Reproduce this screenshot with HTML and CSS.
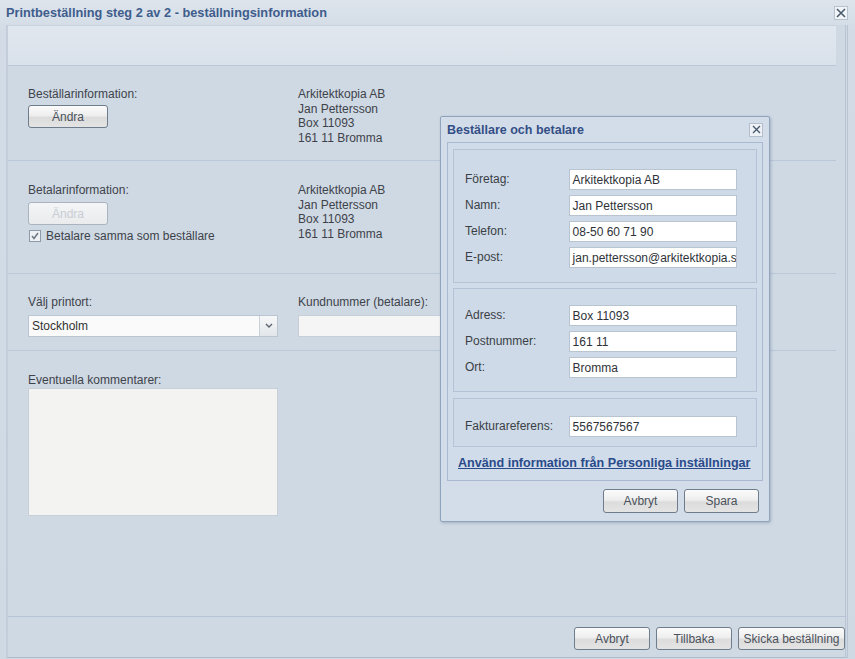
FILE: index.html
```html
<!DOCTYPE html>
<html lang="sv">
<head>
<meta charset="utf-8">
<title>Printbeställning</title>
<link rel="stylesheet" href="styles.css">
</head>
<body>
<div class="window">
  <div class="titlebar">
    <span class="title">Printbeställning steg 2 av 2 - beställningsinformation</span>
    <span class="close"><svg width="10" height="10" viewBox="0 0 10 10"><path d="M1 1L9 9M9 1L1 9" stroke="#4a5a6e" stroke-width="1.6"/></svg></span>
  </div>
  <div class="frame">
    <div class="toolbar"></div>
    <div class="section s1">
      <div class="col-left">
        <div class="label">Beställarinformation:</div>
        <button class="btn">Ändra</button>
      </div>
      <div class="col-right addr">
        <div>Arkitektkopia AB</div>
        <div>Jan Pettersson</div>
        <div>Box 11093</div>
        <div>161 11 Bromma</div>
      </div>
    </div>
    <div class="section s2">
      <div class="col-left">
        <div class="label">Betalarinformation:</div>
        <button class="btn disabled">Ändra</button>
        <label class="check"><span class="box"><svg width="10" height="10" viewBox="0 0 10 10"><path d="M2 5L4 7.5L8 2" fill="none" stroke="#6d7782" stroke-width="1.5"/></svg></span>Betalare samma som beställare</label>
      </div>
      <div class="col-right addr">
        <div>Arkitektkopia AB</div>
        <div>Jan Pettersson</div>
        <div>Box 11093</div>
        <div>161 11 Bromma</div>
      </div>
    </div>
    <div class="section s3">
      <div class="col-left">
        <div class="label">Välj printort:</div>
        <div class="select"><span class="sel-text">Stockholm</span><span class="sel-arrow"><svg width="8" height="6" viewBox="0 0 8 6"><path d="M1 1L4 4L7 1" fill="none" stroke="#5a6470" stroke-width="1.4"/></svg></span></div>
      </div>
      <div class="col-right">
        <div class="label">Kundnummer (betalare):</div>
        <div class="textinput wide"></div>
      </div>
    </div>
    <div class="section s4">
      <div class="col-left">
        <div class="label">Eventuella kommentarer:</div>
        <div class="textarea"></div>
      </div>
    </div>
    <div class="footer">
      <button class="btn fbtn">Avbryt</button>
      <button class="btn fbtn">Tillbaka</button>
      <button class="btn fbtn big">Skicka beställning</button>
    </div>
  </div>

  <div class="dialog">
    <div class="dlg-title">
      <span>Beställare och betalare</span>
      <span class="dlg-close"><svg width="9" height="9" viewBox="0 0 9 9"><path d="M1 1L8 8M8 1L1 8" stroke="#4a5a6e" stroke-width="1.4"/></svg></span>
    </div>
    <div class="dlg-panel">
      <div class="fs fs1">
        <div class="row"><span class="flabel">Företag:</span><span class="finput">Arkitektkopia AB</span></div>
        <div class="row"><span class="flabel">Namn:</span><span class="finput">Jan Pettersson</span></div>
        <div class="row"><span class="flabel">Telefon:</span><span class="finput">08-50 60 71 90</span></div>
        <div class="row"><span class="flabel">E-post:</span><span class="finput">jan.pettersson@arkitektkopia.se</span></div>
      </div>
      <div class="fs fs2">
        <div class="row"><span class="flabel">Adress:</span><span class="finput">Box 11093</span></div>
        <div class="row"><span class="flabel">Postnummer:</span><span class="finput">161 11</span></div>
        <div class="row"><span class="flabel">Ort:</span><span class="finput">Bromma</span></div>
      </div>
      <div class="fs fs3">
        <div class="row"><span class="flabel">Fakturareferens:</span><span class="finput">5567567567</span></div>
      </div>
      <a class="link" href="#">Använd information från Personliga inställningar</a>
    </div>
    <div class="dlg-buttons">
      <button class="btn dbtn">Avbryt</button>
      <button class="btn dbtn">Spara</button>
    </div>
  </div>
</div>
</body>
</html>
```

FILE: styles.css
```css
* { box-sizing: border-box; }
html, body { margin: 0; padding: 0; }
body {
  width: 855px;
  height: 659px;
  overflow: hidden;
  background: #cfd9e4;
  font-family: "Liberation Sans", Arial, sans-serif;
  font-size: 12px;
  color: #3e434a;
}
.window {
  position: relative;
  width: 855px;
  height: 659px;
  display: flex;
  flex-direction: column;
  background: linear-gradient(#dde4ec, #d3dce6 30px, #cfd9e4);
}
.titlebar {
  height: 25px;
  flex: none;
  display: flex;
  align-items: center;
  justify-content: space-between;
  padding: 0 6px 0 6px;
}
.title {
  font-weight: bold;
  font-size: 12.75px;
  color: #3f5d8c;
}
.close {
  width: 14px;
  height: 14px;
  border: 1px solid #b7c2cf;
  background: #f2f5f8;
  display: flex;
  align-items: center;
  justify-content: center;
  margin-right: 1px;
}
.frame {
  flex: 1;
  margin: 0 7px 1px 6px;
  border-left: 2px solid #c3ceda;
  border-right: 3px double #b8c4d4;
  border-bottom: 1px solid #aebccd;
  display: flex;
  flex-direction: column;
  background: #cfd9e4;
}
.toolbar {
  height: 41px;
  flex: none;
  background: linear-gradient(#e1e7ee, #d9e1ea);
  border-top: 1px solid #c9d3de;
  border-bottom: 1px solid #b9c7d9;
  margin-right: 9px;
}
.section {
  display: flex;
  padding-left: 20px;
  border-bottom: 1px solid #bac8da;
  margin-right: 9px;
}
.col-left { width: 270px; display: flex; flex-direction: column; align-items: flex-start; }
.col-right { flex: 1; }
.label { line-height: 14px; margin-bottom: 5px; }
.addr div { line-height: 14.5px; }
.s1 { height: 95px; padding-top: 21px; }
.s1 .label { margin-bottom: 4px; }
.s2 { height: 113px; padding-top: 22px; }
.s3 { height: 77px; padding-top: 21px; }
.s4 { flex: 1; padding-top: 22px; }
.s3 .col-left .label, .s3 .col-right .label { margin-bottom: 6px; }
.s4 .label { margin-bottom: 4px; }

.btn {
  font-family: "Liberation Sans", Arial, sans-serif;
  font-size: 12px;
  color: #4b525b;
  background: linear-gradient(#fbfbfb, #eeeeee 45%, #dcdcdc 55%, #e4e4e4);
  border: 1px solid #6f7c8b;
  border-radius: 3px;
  height: 23px;
  padding: 0;
  cursor: default;
}
.col-left .btn { width: 80px; }
.btn.disabled {
  color: #c8cdd3;
  border-color: #aab3be;
  background: linear-gradient(#f4f5f6, #e9ebed);
}
.check {
  display: flex;
  align-items: center;
  margin-top: 4px;
  margin-left: 1px;
  line-height: 14px;
}
.box {
  width: 12px;
  height: 12px;
  border: 1px solid #8e9aa8;
  background: #eef1f4;
  margin-right: 5px;
  display: flex;
  align-items: center;
  justify-content: center;
}
.select {
  width: 250px;
  height: 22px;
  display: flex;
  background: #fafafa;
  border: 1px solid #bcc6d2;
}
.sel-text { flex: 1; padding: 3px 0 0 3px; color: #333; }
.sel-arrow {
  width: 18px;
  border-left: 1px solid #c8d0da;
  background: linear-gradient(#f6f7f8, #e2e6ea);
  display: flex;
  align-items: center;
  justify-content: center;
}
.textinput.wide {
  height: 22px;
  width: 200px;
  background: #f4f5f4;
  border: 1px solid #c6ced8;
}
.textarea {
  width: 250px;
  height: 128px;
  background: #f3f3f1;
  border: 1px solid #c7cfd9;
  margin-top: -3px;
}
.footer {
  height: 41px;
  flex: none;
  display: flex;
  justify-content: flex-end;
  align-items: flex-start;
  gap: 6px;
  padding: 10px 0 0 0;
  border-top: 1px solid #b6c3d6;
  margin-top: -1px;
}
.fbtn { width: 76px; }
.fbtn.big { width: 107px; }

.dialog {
  position: absolute;
  left: 440px;
  top: 116px;
  width: 330px;
  height: 406px;
  background: #d3dde9;
  border: 1px solid #90a3bd;
  border-radius: 2px;
  box-shadow: 1px 1px 3px rgba(80,100,130,0.35);
  display: flex;
  flex-direction: column;
}
.dlg-title {
  height: 25px;
  flex: none;
  display: flex;
  align-items: center;
  justify-content: space-between;
  padding: 0 6px 0 6px;
  font-weight: bold;
  color: #334f86;
  font-size: 12.5px;
}
.dlg-close {
  width: 14px;
  height: 14px;
  border: 1px solid #b3bfcd;
  background: #eef2f6;
  display: flex;
  align-items: center;
  justify-content: center;
}
.dlg-panel {
  margin: 0 6px;
  height: 339px;
  border: 1px solid #a9bad0;
  background: #d1dcea;
  padding: 6px 5px 0 5px;
  display: flex;
  flex-direction: column;
}
.fs {
  border: 1px solid #b4c3d6;
  background: #cfdae8;
  padding: 0 19px 0 11px;
  display: flex;
  flex-direction: column;
  gap: 6px;
}
.fs1 { height: 134px; padding-top: 19px; }
.fs2 { height: 104px; padding-top: 16px; margin-top: 5px; }
.fs3 { height: 49px; padding-top: 17px; margin-top: 6px; }
.row { display: flex; align-items: center; height: 20px; }
.flabel { width: 104px; color: #3a3f46; }
.finput {
  width: 169px;
  height: 21px;
  background: #ffffff;
  border: 1px solid #b9c4d1;
  padding: 3px 0 0 3px;
  color: #2e3238;
  white-space: nowrap;
  overflow: hidden;
}
.link {
  margin-top: 9px;
  margin-left: 5px;
  font-weight: bold;
  font-size: 12.6px;
  color: #2a4b8a;
  text-decoration: underline;
  white-space: nowrap;
}
.dlg-buttons {
  display: flex;
  justify-content: flex-end;
  gap: 6px;
  padding: 8px 10px 0 0;
}
.dbtn { width: 75px; height: 24px; }
```
